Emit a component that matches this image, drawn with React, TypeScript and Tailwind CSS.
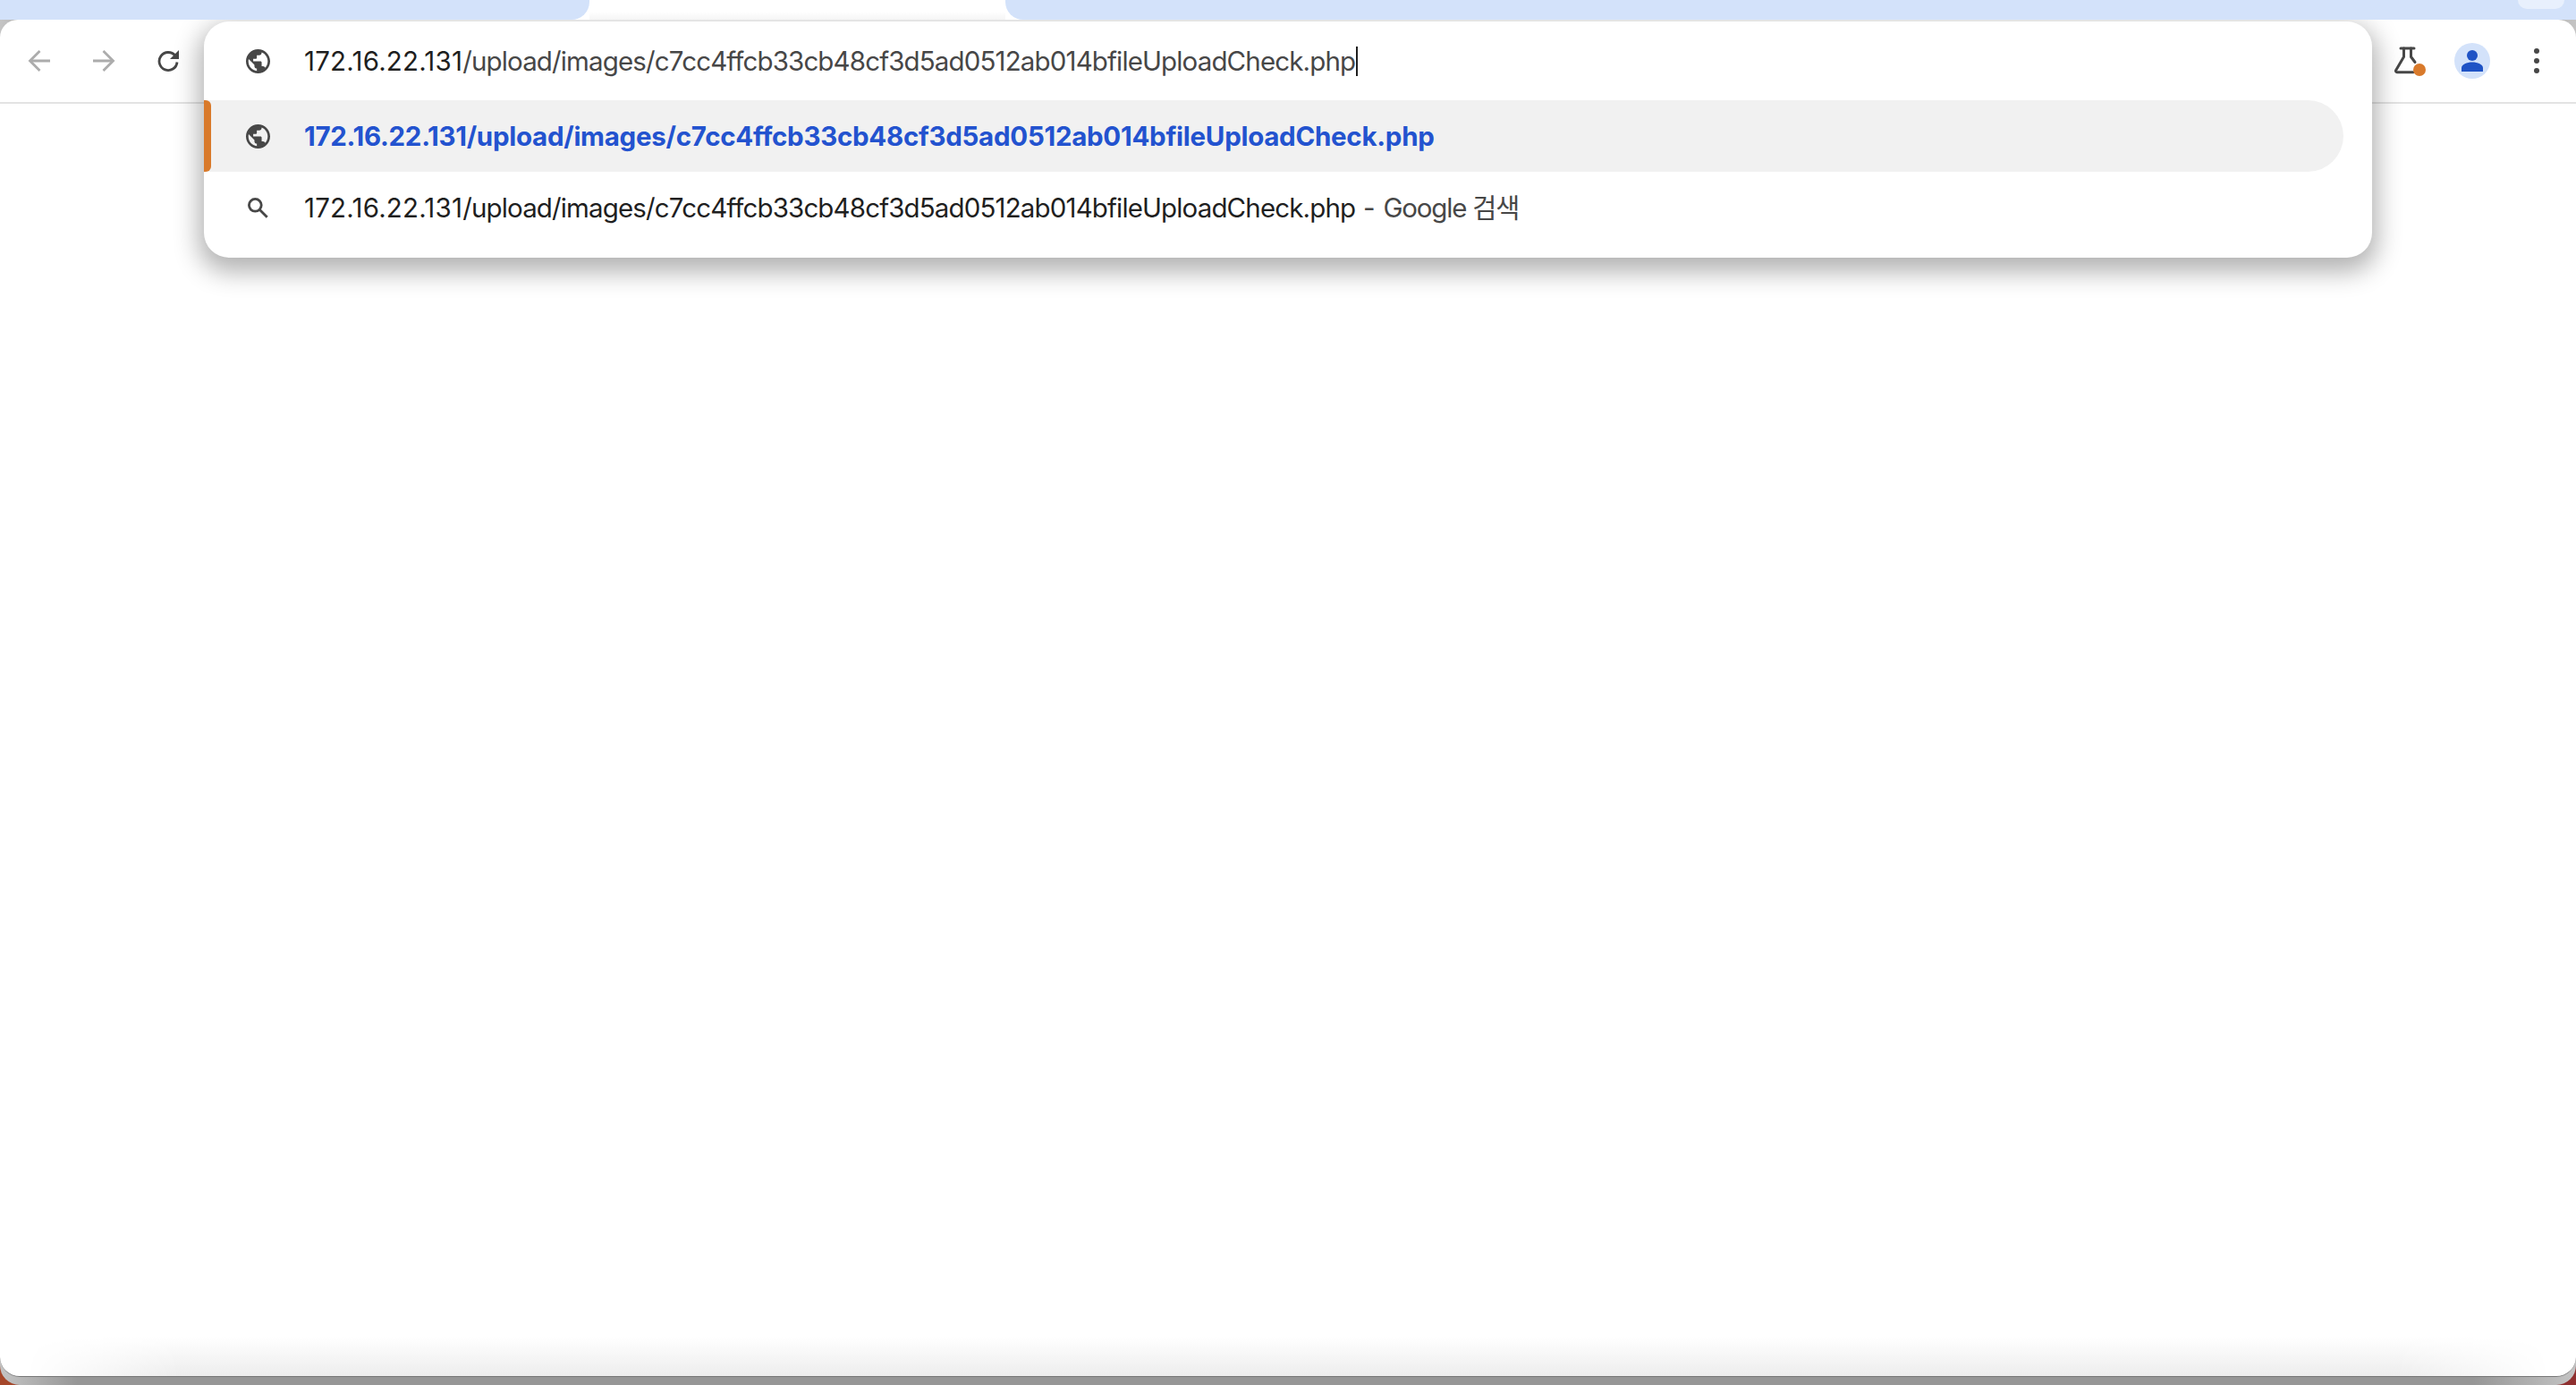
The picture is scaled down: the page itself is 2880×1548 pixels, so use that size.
import React from 'react';

const URL_PATH = '/upload/images/c7cc4ffcb33cb48cf3d5ad0512ab014bfileUploadCheck.php';
const HOST = '172.16.22.131';

const GlobeIcon = () => (
  <svg viewBox="2 2 20 20" className="w-[27px] h-[27px] shrink-0" fill="#474747">
    <path d="M12 2C6.48 2 2 6.48 2 12s4.48 10 10 10 10-4.48 10-10S17.52 2 12 2zm-1 17.93c-3.95-.49-7-3.85-7-7.93 0-.62.08-1.21.21-1.79L9 15v1c0 1.1.9 2 2 2v1.93zm6.9-2.54c-.26-.81-1-1.39-1.9-1.39h-1v-3c0-.55-.45-1-1-1H8v-2h2c.55 0 1-.45 1-1V7h2c1.1 0 2-.9 2-2v-.41c2.93 1.19 5 4.06 5 7.41 0 2.08-.8 3.97-2.1 5.39z" />
  </svg>
);

const SearchIcon = () => (
  <svg viewBox="3 3 18 18" className="w-[23px] h-[23px] shrink-0" fill="none" stroke="#474747" strokeWidth="2.2">
    <circle cx="9.5" cy="9.5" r="5.4" />
    <path d="M13.5 13.5 20 20" />
  </svg>
);

const ArrowIcon = ({ flip }: { flip?: boolean }) => (
  <svg viewBox="0 0 26 26" className={`w-[26px] h-[26px] ${flip ? 'scale-x-[-1]' : ''}`} fill="none" stroke="#acacac" strokeWidth="2.8">
    <path d="M25 13H3" />
    <path d="M13.5 2 2.5 13l11 11" />
  </svg>
);

const ReloadIcon = () => (
  <svg viewBox="0 0 26 26" className="w-[26px] h-[26px]" fill="none">
    <path d="M20.8 7.2A10 10 0 1 0 23 14.5" stroke="#474747" strokeWidth="2.8" />
    <path d="M25 1v10H15z" fill="#474747" />
  </svg>
);

const FlaskIcon = () => (
  <div className="relative w-[32px] h-[32px]">
    <svg viewBox="0 0 32 32" className="w-[32px] h-[32px]" fill="none" stroke="#474747" strokeWidth="3" strokeLinecap="round" strokeLinejoin="round">
      <path d="M7 2h15" />
      <path d="M10.5 2v9.5L1.7 26.5c-.6 1 .1 2.2 1.3 2.2h18" />
      <path d="M18.5 2v9.5l4.5 6" />
    </svg>
    <span className="absolute left-[21px] top-[19px] w-[14px] h-[14px] rounded-full bg-[#d97a2b]" />
  </div>
);

const Avatar = () => (
  <div className="w-[40px] h-[40px] rounded-full bg-[#d3e2fa] flex items-center justify-center">
    <svg viewBox="0 0 40 40" className="w-[40px] h-[40px]" fill="#1f53c5">
      <circle cx="20" cy="14" r="6" />
      <path d="M8 32v-4c0-4 6-6.500 12-6.500S32 24 32 28v4z" />
    </svg>
  </div>
);

const Dots = () => (
  <div className="flex flex-col gap-[5px] items-center">
    <span className="w-[6px] h-[6px] rounded-full bg-[#474747]" />
    <span className="w-[6px] h-[6px] rounded-full bg-[#474747]" />
    <span className="w-[6px] h-[6px] rounded-full bg-[#474747]" />
  </div>
);

const App: React.FC = () => {
  return (
    <div className="w-full h-[1548px] overflow-hidden flex flex-col bg-white font-['Inter','Noto_Sans_CJK_KR',sans-serif]">
      {/* tab strip */}
      <div className="h-[22px] flex shrink-0">
        <div className="w-[659px] bg-[#d3e2fa] rounded-br-[20px]" />
        <div className="w-[465px] bg-gradient-to-b from-white from-60% to-[#f5f5f5]" />
        <div className="flex-1 bg-[#d3e2fa] rounded-bl-[20px] flex justify-end pr-[13px]">
          <div className="w-[52px] h-[10px] bg-[#e8f0fd] rounded-b-[12px]" />
        </div>
      </div>

      {/* window */}
      <div className="flex-1 relative bg-[linear-gradient(90deg,#a5472a_0,#a5472a_50%,#8f2f2f_50%,#8f2f2f_100%)]">
        <div className="absolute top-0 left-0 right-0 h-[60px] bg-[#d3e2fa]" />
        <div className="relative h-full rounded-b-[22px] bg-[linear-gradient(90deg,#c4c4c4_0,#969696_3%,#969696_96%,#c4c4c4_100%)] pb-[9px]">
          <div className="h-full bg-white rounded-t-[20px] rounded-b-[22px] border-b border-[#777777] flex flex-col relative overflow-hidden">
            {/* toolbar */}
            <div className="h-[94px] shrink-0 border-b-2 border-[#e3e3e3] flex items-center">
              <div className="w-[88px] flex justify-center"><ArrowIcon /></div>
              <div className="w-[56px] flex justify-center"><ArrowIcon flip /></div>
              <div className="ml-[16px] w-[56px] flex justify-center"><ReloadIcon /></div>
              <div className="flex-1" />
              <div className="w-[32px] mr-[35px]"><FlaskIcon /></div>
              <div className="mr-[49px]"><Avatar /></div>
              <div className="mr-[41px]"><Dots /></div>
            </div>
            <div className="flex-1" />
            {/* shadow from the bottom edge */}
            <div className="h-[44px] shrink-0 bg-gradient-to-b from-white to-[#ededed] [mask-image:linear-gradient(90deg,transparent_1%,black_7%,black_93%,transparent_99%)]" />

            {/* omnibox popup */}
            <div className="absolute left-[228px] top-[2px] w-[2424px] h-[264px] bg-white rounded-[28px] shadow-[0_10px_28px_6px_rgba(0,0,0,0.30)] text-[29.5px] overflow-hidden">
              <div className="h-[88px] flex items-center">
                <div className="w-[112px] flex justify-center pl-[8px]"><GlobeIcon /></div>
                <span className="text-[#1f1f1f] tracking-[0.2px]">{HOST}</span>
                <span className="text-[#474747] tracking-[-0.86px]">{URL_PATH}</span>
                <span className="ml-[1px] w-[2px] h-[33px] bg-[#1f1f1f]" />
              </div>
              <div className="h-[80px] w-[2392px] bg-[#f1f1f1] rounded-r-[40px] flex items-center relative">
                <span className="absolute left-0 top-0 w-[8px] h-[80px] bg-[#d97a2b] rounded-r-[6px]" />
                <div className="w-[112px] flex justify-center pl-[8px]"><GlobeIcon /></div>
                <span className="text-[#2353cf] font-bold tracking-[-0.28px]">{HOST}{URL_PATH}</span>
              </div>
              <div className="h-[80px] flex items-center">
                <div className="w-[112px] flex justify-center pl-[8px]"><SearchIcon /></div>
                <span className="text-[#1f1f1f] tracking-[0.2px]">{HOST}</span>
                <span className="text-[#1f1f1f] tracking-[-0.86px]">{URL_PATH}</span>
                <span className="text-[#474747] whitespace-pre tracking-[0.4px]"> - </span>
                <span className="text-[#474747] whitespace-pre tracking-[-1.2px]">Google 검색</span>
              </div>
            </div>
          </div>
        </div>
      </div>
    </div>
  );
};

export default App;
